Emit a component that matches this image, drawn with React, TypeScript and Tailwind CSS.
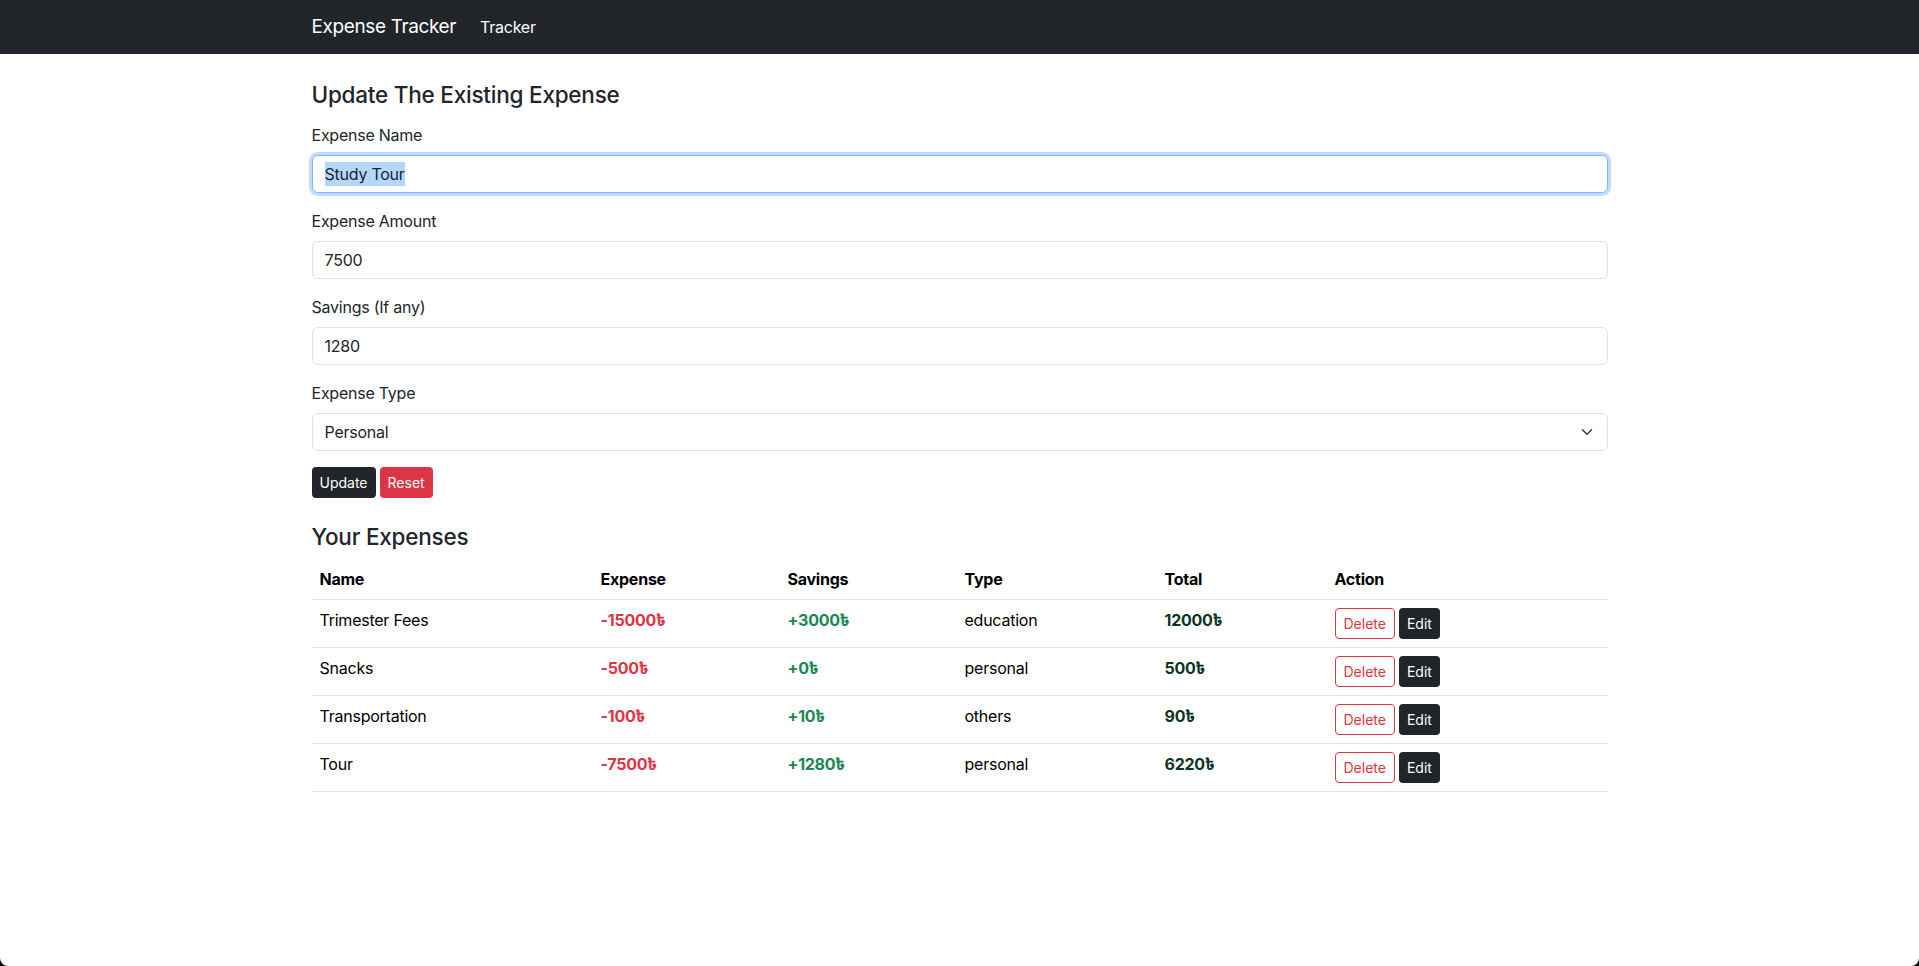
const expenses = [
  { name: "Trimester Fees", expense: 15000, savings: 3000, type: "education" },
  { name: "Snacks", expense: 500, savings: 0, type: "personal" },
  { name: "Transportation", expense: 100, savings: 10, type: "others" },
  { name: "Tour", expense: 7500, savings: 1280, type: "personal" },
];

function Field({ label, value, focused }: { label: string; value: string; focused?: boolean }) {
  return (
    <div className="mb-4">
      <div className="mb-2 leading-6">{label}</div>
      {focused ? (
        <div className="h-[38px] flex items-center px-3 rounded-[6px] border border-[#86b7fe] shadow-[0_0_0_3px_rgba(13,110,253,0.25)] bg-white">
          <span className="bg-[#b3d7ff] leading-6">{value}</span>
        </div>
      ) : (
        <div className="h-[38px] flex items-center px-3 rounded-[6px] border border-[#dee2e6] bg-white">
          <span className="leading-6">{value}</span>
        </div>
      )}
    </div>
  );
}

export default function App() {
  return (
    <div className="bg-black min-h-[966px]">
      <div
        className="bg-white min-h-[966px] rounded-b-[8px] text-[#212529] text-base tracking-[-0.015em]"
        style={{ fontFamily: "Inter, 'Noto Sans', 'Noto Sans Bengali', 'DejaVu Sans', sans-serif" }}
      >
        <nav className="bg-[#212529] h-[54px]">
          <div className="w-[1320px] mx-auto px-3 h-full flex items-center">
            <span className="text-white text-[19px] tracking-[-0.02em] mr-6">Expense Tracker</span>
            <span className="text-white">Tracker</span>
          </div>
        </nav>

        <div className="w-[1320px] mx-auto px-3">
          <h4 className="text-[22.5px] leading-[29px] font-medium tracking-[-0.01em] mt-[26px] mb-[14px]">Update The Existing Expense</h4>

          <Field label="Expense Name" value="Study Tour" focused />
          <Field label="Expense Amount" value="7500" />
          <Field label="Savings (If any)" value="1280" />

          <div className="mb-4">
            <div className="mb-2 leading-6">Expense Type</div>
            <div className="h-[38px] flex items-center justify-between pl-3 pr-3 rounded-[6px] border border-[#dee2e6] bg-white">
              <span className="leading-6">Personal</span>
              <svg width="16" height="12" viewBox="0 0 16 16" fill="none">
                <path d="m2 5 6 6 6-6" stroke="#343a40" strokeWidth="2" strokeLinecap="round" strokeLinejoin="round" />
              </svg>
            </div>
          </div>

          <div className="flex gap-1">
            <button className="h-[31px] px-2 text-sm tracking-normal text-white bg-[#212529] rounded-[4px]">Update</button>
            <button className="h-[31px] px-2 text-sm tracking-normal text-white bg-[#dc3545] rounded-[4px]">Reset</button>
          </div>

          <h4 className="text-[22.5px] leading-[29px] font-medium tracking-[-0.01em] mt-6 mb-2">Your Expenses</h4>

          <table className="w-full border-collapse text-black">
            <thead>
              <tr className="border-b border-[#dee2e6]">
                <th className="w-[281px] p-2 text-left font-bold leading-6">Name</th>
                <th className="w-[187px] p-2 text-left font-bold leading-6">Expense</th>
                <th className="w-[177px] p-2 text-left font-bold leading-6">Savings</th>
                <th className="w-[200px] p-2 text-left font-bold leading-6">Type</th>
                <th className="w-[170px] p-2 text-left font-bold leading-6">Total</th>
                <th className="p-2 text-left font-bold leading-6">Action</th>
              </tr>
            </thead>
            <tbody>
              {expenses.map((e) => (
                <tr key={e.name} className="border-b border-[#dee2e6]">
                  <td className="p-2 align-top leading-6">{e.name}</td>
                  <td className="p-2 align-top leading-6 font-bold text-[#dc3545]">-{e.expense}৳</td>
                  <td className="p-2 align-top leading-6 font-bold text-[#198754]">+{e.savings}৳</td>
                  <td className="p-2 align-top leading-6">{e.type}</td>
                  <td className="p-2 align-top leading-6 font-bold text-[#0a3622]">{e.expense - e.savings}৳</td>
                  <td className="p-2 align-top">
                    <div className="flex gap-1">
                      <button className="h-[31px] px-2 text-sm tracking-normal text-[#dc3545] border border-[#dc3545] bg-white rounded-[4px]">Delete</button>
                      <button className="h-[31px] px-2 text-sm tracking-normal text-white bg-[#212529] rounded-[4px]">Edit</button>
                    </div>
                  </td>
                </tr>
              ))}
            </tbody>
          </table>
        </div>
      </div>
    </div>
  );
}
